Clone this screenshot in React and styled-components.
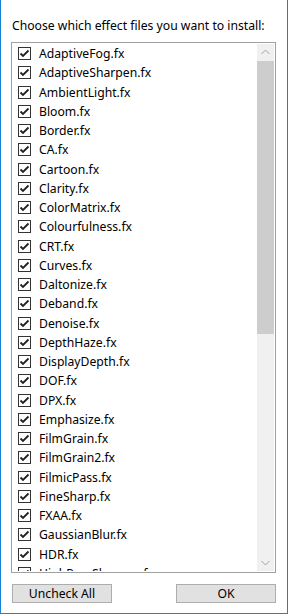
import React from "react";
import styled, { createGlobalStyle } from "styled-components";

const Global = createGlobalStyle`
  html, body { margin: 0; padding: 0; background: #fff; }
  body { font-family: "Segoe UI", "Noto Sans", "Liberation Sans", sans-serif; }
`;

const Window = styled.div`
  box-sizing: border-box;
  width: 288px;
  height: 614px;
  border: 1px solid #1883d7;
  border-top: none;
  background: #fff;
  display: flex;
  flex-direction: column;
  padding: 18px 11px 10px 10px;
`;

const Title = styled.div`
  font-size: 12.2px;
  line-height: 16px;
  color: #000;
  margin-left: 1px;
  height: 24px;
`;

const ListBox = styled.div`
  box-sizing: border-box;
  height: 533px;
  border: 1px solid #a0a0a0;
  display: flex;
  padding: 1px;
  overflow: hidden;
`;

const Items = styled.div`
  flex: 1;
  overflow: hidden;
`;

const Item = styled.div`
  height: 19.25px;
  display: flex;
  align-items: center;
  gap: 8px;
  padding-left: 5px;
  font-size: 12.2px;
  color: #000;
  white-space: nowrap;
`;

const Box = styled.span`
  box-sizing: border-box;
  width: 13px;
  height: 13px;
  border: 1px solid #333;
  background: #fff;
  display: flex;
  align-items: center;
  justify-content: center;
  flex: none;
`;

const ScrollBar = styled.div`
  width: 17px;
  display: flex;
  flex-direction: column;
  background: #f0f0f0;
`;

const Arrow = styled.div`
  height: 17px;
  display: flex;
  align-items: center;
  justify-content: center;
  flex: none;
`;

const Thumb = styled.div`
  height: 273px;
  background: #cdcdcd;
  flex: none;
`;

const Track = styled.div`
  flex: 1;
`;

const Buttons = styled.div`
  display: flex;
  justify-content: space-between;
  margin-top: 11px;
  padding-left: 1px;
`;

const Button = styled.button`
  box-sizing: border-box;
  width: 100px;
  height: 19px;
  background: #e1e1e1;
  border: 1px solid #adadad;
  font-family: inherit;
  font-size: 12.2px;
  color: #000;
  padding: 0;
  line-height: 16px;
`;

const files = [
  "AdaptiveFog.fx", "AdaptiveSharpen.fx", "AmbientLight.fx", "Bloom.fx", "Border.fx",
  "CA.fx", "Cartoon.fx", "Clarity.fx", "ColorMatrix.fx", "Colourfulness.fx", "CRT.fx",
  "Curves.fx", "Daltonize.fx", "Deband.fx", "Denoise.fx", "DepthHaze.fx", "DisplayDepth.fx",
  "DOF.fx", "DPX.fx", "Emphasize.fx", "FilmGrain.fx", "FilmGrain2.fx", "FilmicPass.fx",
  "FineSharp.fx", "FXAA.fx", "GaussianBlur.fx", "HDR.fx", "HighPassSharpen.fx",
];

const Check = () => (
  <svg width="11" height="11" viewBox="0 0 11 11">
    <path d="M1.5 5.5 L4 8 L9.5 2.5" fill="none" stroke="#222" strokeWidth="1.8" />
  </svg>
);

const Chevron = ({ up }) => (
  <svg width="9" height="6" viewBox="0 0 9 6">
    <path d={up ? "M0.5 5 L4.5 1 L8.5 5" : "M0.5 1 L4.5 5 L8.5 1"} fill="none" stroke="#a3a3a3" strokeWidth="1" />
  </svg>
);

export default function App() {
  return (
    <>
      <Global />
      <Window>
        <Title>Choose which effect files you want to install:</Title>
        <ListBox>
          <Items>
            {files.map((f) => (
              <Item key={f}>
                <Box><Check /></Box>
                {f}
              </Item>
            ))}
          </Items>
          <ScrollBar>
            <Arrow><Chevron up /></Arrow>
            <Thumb />
            <Track />
            <Arrow><Chevron /></Arrow>
          </ScrollBar>
        </ListBox>
        <Buttons>
          <Button>Uncheck All</Button>
          <Button>OK</Button>
        </Buttons>
      </Window>
    </>
  );
}
